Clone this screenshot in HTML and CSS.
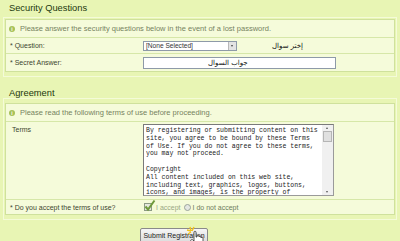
FILE: index.html
```html
<!DOCTYPE html>
<html>
<head>
<meta charset="utf-8">
<title>Register</title>
<link rel="stylesheet" href="styles.css">
</head>
<body>
    <div class="section">
        <div class="sectionTitle">Security Questions</div>
        <div class="sectionBody">
            <div class="box">
                <div class="row infoRow">
                    <span class="infoIcon">i</span>
                    Please answer the security questions below in the event of a lost password.
                </div>
                <div class="row questionRow">
                    <div class="label">* Question:</div>
                    <div class="value">
                        <div class="selectBox">
                            <span class="selectText">[None Selected]</span>
                            <span class="selectButton"></span>
                        </div>
                        <span class="arabicLabel" dir="rtl">إختر سوال</span>
                    </div>
                </div>
                <div class="row answerRow">
                    <div class="label">* Secret Answer:</div>
                    <div class="value">
                        <div class="textBox"><span class="answerText" dir="rtl">جواب السوال</span></div>
                    </div>
                </div>
            </div>
        </div>
    </div>

    <div class="section second">
        <div class="sectionTitle">Agreement</div>
        <div class="sectionBody">
            <div class="box">
                <div class="row infoRow">
                    <span class="infoIcon">i</span>
                    Please read the following terms of use before proceeding.
                </div>
                <div class="row termsRow">
                    <div class="label">Terms</div>
                    <div class="value">
                        <div class="termsArea">
                            <div class="termsText">By registering or submitting content on this
site, you agree to be bound by these Terms
of Use. If you do not agree to these terms,
you may not proceed.

Copyright
All content included on this web site,
including text, graphics, logos, buttons,
icons, and images, is the property of</div>
                            <div class="scrollBar">
                                <span class="scrollUp"></span>
                                <span class="scrollThumb"></span>
                                <span class="scrollTrack"></span>
                                <span class="scrollDown"></span>
                            </div>
                        </div>
                    </div>
                </div>
                <div class="row acceptRow">
                    <div class="label">* Do you accept the terms of use?</div>
                    <div class="value">
                        <svg class="checkIcon" width="13" height="13" viewBox="0 0 13 13">
                            <rect x="1.5" y="4.5" width="7" height="7" fill="#e4e8dc" stroke="#8c9a84"/>
                            <path d="M2.5 7.5 L5 10.5 L11.5 1.5" fill="none" stroke="#6f9a3c" stroke-width="2"/>
                        </svg>
                        <span class="acceptText">I accept</span>
                        <span class="radio"></span>
                        <span class="rejectText">I do not accept</span>
                    </div>
                </div>
            </div>
        </div>
    </div>

    <div class="buttonBar">
        <div class="submitButton">Submit Registration</div>
        <svg class="cursor" width="20" height="20" viewBox="0 0 20 20">
            <path d="M4 1 L5 5 M1 4 L5 5 M8 1 L6 5 M2 8 L5 6" stroke="#f2c21b" stroke-width="1.4"/>
            <path d="M8 6 C8 5 10 5 10 6 L10 11 L11 11 L11 10 C11 9 13 9 13 10 L13 11 C13 10 15 10 15 11 L15 12 C15 11 17 11 17 12 L17 16 C17 18 16 20 15 20 L10 20 C9 20 8 19 7 18 L5 15 C4 14 6 13 7 14 L8 15 Z" fill="#ffffff" stroke="#333333" stroke-width="0.8"/>
        </svg>
    </div>
</body>
</html>
```

FILE: styles.css
```css
body {
    margin: 0;
    background-color: #e8f5b4;
    font-family: "Liberation Sans", Arial, sans-serif;
    font-size: 7px;
    color: #3d4630;}
.section {
    padding: 0 3px 0 3px;}
.second {
    margin-top: 4px;}
.sectionTitle {
    height: 17px;
    line-height: 17px;
    padding-left: 6px;
    font-size: 9.3px;
    color: #23380f;}
.second .sectionTitle {
    height: 13px;
    padding-top: 4px;
    line-height: 17px;}
.sectionBody {
    border: 1px solid #f4fbd8;
    padding: 1px 1px 4px 1px;}
.second .sectionBody {
    padding-top: 4px;}
.box {
    background-color: #f5fbda;
    border: 1px solid #cfe19c;}
.row {
    display: flex;
    align-items: center;
    border-top: 1px solid #d6e7a8;}
.row:first-child {
    border-top: none;}
.infoRow {
    height: 17px;
    padding-left: 3px;
    font-size: 7.5px;
    color: #76835f;}
.infoIcon {
    width: 6px;
    height: 6px;
    line-height: 6px;
    border-radius: 50%;
    background-color: #a6c158;
    color: #ffffff;
    font-size: 5px;
    font-weight: bold;
    text-align: center;
    margin-right: 5px;}
.label {
    width: 133px;
    padding-left: 4px;
    flex-shrink: 0;}
.value {
    display: flex;
    align-items: center;}
.questionRow {height: 15px;}
.answerRow {height: 17px;}
.selectBox {
    display: flex;
    width: 92px;
    height: 8px;
    border: 1px solid #8e9aa8;
    background-color: #ffffff;}
.selectText {
    flex: 1;
    line-height: 8px;
    padding-left: 2px;
    font-size: 6.6px;
    color: #333333;}
.selectButton {
    width: 7px;
    background-color: #e3e3e3;
    border-left: 1px solid #b8b8b8;
    position: relative;}
.selectButton:after {
    content: "";
    position: absolute;
    left: 2px;
    top: 3px;
    border-left: 1.5px solid transparent;
    border-right: 1.5px solid transparent;
    border-top: 2px solid #444444;}
.arabicLabel {
    margin-left: 35px;
    font-family: "DejaVu Sans", sans-serif;
    font-size: 7px;
    color: #111111;}
.textBox {
    width: 191px;
    height: 10px;
    border: 1px solid #8e9aa8;
    background-color: #ffffff;}
.answerText {
    display: inline-block;
    margin-left: 64px;
    line-height: 10px;
    font-family: "DejaVu Sans", sans-serif;
    font-size: 7px;
    color: #111111;}
.termsRow {
    height: 77px;
    align-items: flex-start;}
.termsRow .label {
    padding-top: 4px;
    padding-left: 6px;
    width: 131px;}
.termsArea {
    display: flex;
    margin-top: 2px;
    width: 189px;
    height: 70px;
    border: 1px solid #9a9a9a;
    border-top-color: #7a7a7a;
    border-left-color: #7a7a7a;
    background-color: #ffffff;}
.termsText {
    flex: 1;
    overflow: hidden;
    white-space: pre;
    padding: 2px 0 0 2px;
    font-family: "Liberation Mono", "Courier New", monospace;
    font-size: 6.5px;
    line-height: 7.8px;
    color: #222222;}
.scrollBar {
    width: 11px;
    display: flex;
    flex-direction: column;
    background-color: #f0f0f0;}
.scrollUp, .scrollDown {
    height: 6px;
    position: relative;}
.scrollUp:after, .scrollDown:after {
    content: "";
    position: absolute;
    left: 4px;
    top: 2px;
    border-left: 1.5px solid transparent;
    border-right: 1.5px solid transparent;}
.scrollUp:after {border-bottom: 2px solid #555555;}
.scrollDown:after {border-top: 2px solid #555555;}
.scrollThumb {
    height: 9px;
    margin: 0 1px;
    background-color: #e0e0e0;
    border: 1px solid #b5b5b5;}
.scrollTrack {flex: 1;}
.acceptRow {height: 14px;}
.checkIcon {
    margin-top: -3px;}
.acceptText {
    color: #9aa884;
    margin-right: 3px;}
.radio {
    width: 5px;
    height: 5px;
    border-radius: 50%;
    border: 1px solid #9aa39a;
    background-color: #e4e7e2;
    margin-right: 2px;}
.rejectText {
    color: #6e7b5c;}
.buttonBar {
    position: relative;
    padding: 8px 0 0 140px;}
.submitButton {
    width: 66px;
    height: 14px;
    line-height: 13px;
    text-align: center;
    border: 1px solid #8a8a8a;
    border-radius: 2px;
    background: linear-gradient(#f6f6f6, #dadada);
    color: #222222;}
.cursor {
    position: absolute;
    left: 186px;
    top: 6px;}
```
